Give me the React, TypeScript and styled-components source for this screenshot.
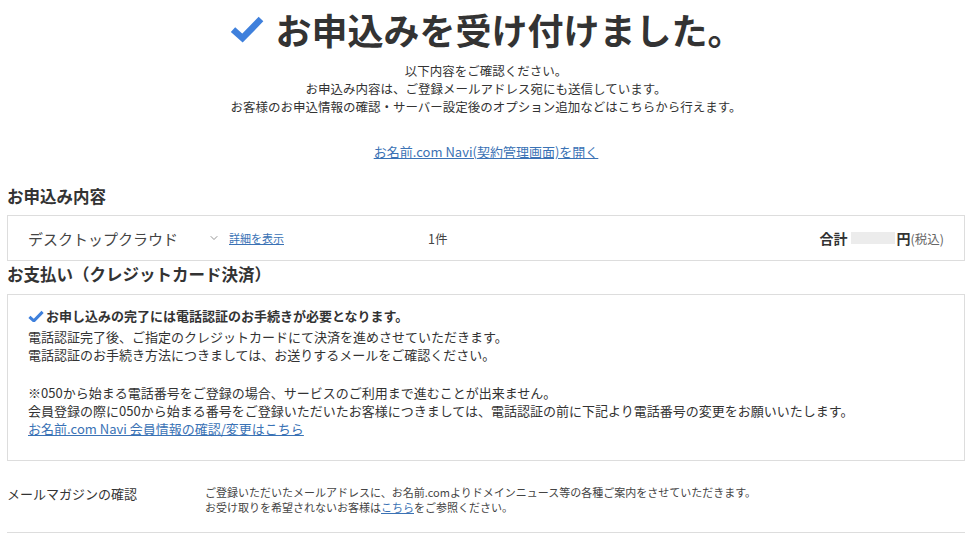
import styled, { createGlobalStyle } from "styled-components";
import { ChevronDown } from "lucide-react";

const GlobalStyle = createGlobalStyle`
  html, body {
    margin: 0;
    padding: 0;
    background: #fff;
  }
  body {
    font-family: "Noto Sans CJK JP", "Liberation Sans", sans-serif;
    color: #333;
  }
`;

const CheckMark = ({ size, color }: { size: number; color: string }) => (
  <svg width={size} height={size * 0.8} viewBox="0 0 34 27" aria-hidden="true">
    <path
      d="M3 14.5 L12.5 23 L31 4"
      fill="none"
      stroke={color}
      strokeWidth="6.5"
      strokeLinecap="butt"
      strokeLinejoin="miter"
    />
  </svg>
);

export default function App() {
  return (
    <>
      <GlobalStyle />
      <Page>
        <Title>
          <CheckMark size={34} color="#3f80dc" />
          <TitleText>お申込みを受け付けました。</TitleText>
        </Title>

        <Lead>
          <Line>以下内容をご確認ください。</Line>
          <Line>お申込み内容は、ご登録メールアドレス宛にも送信しています。</Line>
          <Line>お客様のお申込情報の確認・サーバー設定後のオプション追加などはこちらから行えます。</Line>
        </Lead>

        <NaviLink>
          <Link href="#">お名前.com Navi(契約管理画面)を開く</Link>
        </NaviLink>

        <SectionTitle $top={24} $gap={7}>お申込み内容</SectionTitle>
        <OrderBox>
          <ProductName>デスクトップクラウド</ProductName>
          <Detail>
            <ChevronDown size={12} color="#888" strokeWidth={1.8} />
            <SmallLink href="#">詳細を表示</SmallLink>
          </Detail>
          <Quantity>1件</Quantity>
          <Total>
            <strong>合計</strong>
            <Hidden />
            <strong>円</strong>
            <Tax>(税込)</Tax>
          </Total>
        </OrderBox>

        <SectionTitle $top={0} $gap={8}>お支払い（クレジットカード決済）</SectionTitle>
        <PaymentBox>
          <Notice>
            <CheckMark size={16} color="#3f80dc" />
            お申し込みの完了には電話認証のお手続きが必要となります。
          </Notice>
          <Paragraph>
            電話認証完了後、ご指定のクレジットカードにて決済を進めさせていただきます。
            <br />
            電話認証のお手続き方法につきましては、お送りするメールをご確認ください。
          </Paragraph>
          <Paragraph>
            ※050から始まる電話番号をご登録の場合、サービスのご利用まで進むことが出来ません。
            <br />
            会員登録の際に050から始まる番号をご登録いただいたお客様につきましては、電話認証の前に下記より電話番号の変更をお願いいたします。
            <br />
            <Link href="#">お名前.com Navi 会員情報の確認/変更はこちら</Link>
          </Paragraph>
        </PaymentBox>

        <MailRow>
          <MailLabel>メールマガジンの確認</MailLabel>
          <MailText>
            ご登録いただいたメールアドレスに、お名前.comよりドメインニュース等の各種ご案内をさせていただきます。
            <br />
            お受け取りを希望されないお客様は<Link href="#">こちら</Link>をご参照ください。
          </MailText>
        </MailRow>
      </Page>
    </>
  );
}

const Page = styled.div`
  width: 958px;
  padding: 0 9px 0 7px;
`;

const Title = styled.h1`
  margin: 0;
  height: 58px;
  display: flex;
  align-items: center;
  justify-content: center;
  gap: 11px;
  padding-left: 2px;
`;

const TitleText = styled.span`
  font-size: 36px;
  font-weight: 700;
  color: #333;
`;

const Lead = styled.div`
  margin: 4px 0 0;
  text-align: center;
  font-size: 12.5px;
  color: #333;
`;

const Line = styled.div`
  height: 18px;
  line-height: 18px;
`;

const NaviLink = styled.p`
  margin: 27px 0 0;
  text-align: center;
  font-size: 13px;
  line-height: 17px;
`;

const Link = styled.a`
  color: #3a72b5;
  text-decoration: underline;
`;

const SmallLink = styled(Link)`
  font-size: 11px;
`;

const SectionTitle = styled.h2<{ $top: number; $gap: number }>`
  margin: ${(p) => p.$top}px 0 ${(p) => p.$gap}px;
  font-size: 16.5px;
  line-height: 24px;
  font-weight: 700;
  color: #333;
`;

const OrderBox = styled.div`
  height: 46px;
  box-sizing: border-box;
  border: 1px solid #ddd;
  padding: 0 20px;
  display: grid;
  grid-template-columns: 180px 220px 1fr auto;
  align-items: center;
  margin-bottom: 1px;
`;

const ProductName = styled.span`
  font-size: 15px;
  color: #444;
`;

const Detail = styled.span`
  display: flex;
  align-items: center;
  gap: 9px;
`;

const Quantity = styled.span`
  font-size: 12.5px;
  color: #444;
`;

const Total = styled.span`
  display: flex;
  align-items: center;
  font-size: 14px;
  color: #333;
`;

const Hidden = styled.span`
  display: inline-block;
  width: 44px;
  height: 12px;
  margin: 0 2px 0 3px;
  background: #ececec;
`;

const Tax = styled.span`
  font-size: 12.5px;
  color: #666;
`;

const PaymentBox = styled.div`
  height: 167px;
  box-sizing: border-box;
  border: 1px solid #ddd;
  padding: 12px 20px 0;
`;

const Notice = styled.div`
  display: flex;
  align-items: center;
  gap: 2px;
  font-size: 13px;
  font-weight: 700;
  line-height: 18px;
  margin-bottom: 3px;
  color: #333;
`;

const Paragraph = styled.p`
  margin: 0 0 20px;
  font-size: 13px;
  line-height: 18px;
  color: #333;
`;

const MailRow = styled.div`
  display: flex;
  align-items: flex-start;
  padding: 24px 0 17px;
  border-bottom: 1px solid #ddd;
`;

const MailLabel = styled.div`
  width: 198px;
  flex-shrink: 0;
  font-size: 13px;
  line-height: 18px;
  color: #333;
`;

const MailText = styled.div`
  font-size: 11px;
  line-height: 15px;
  color: #444;
`;
